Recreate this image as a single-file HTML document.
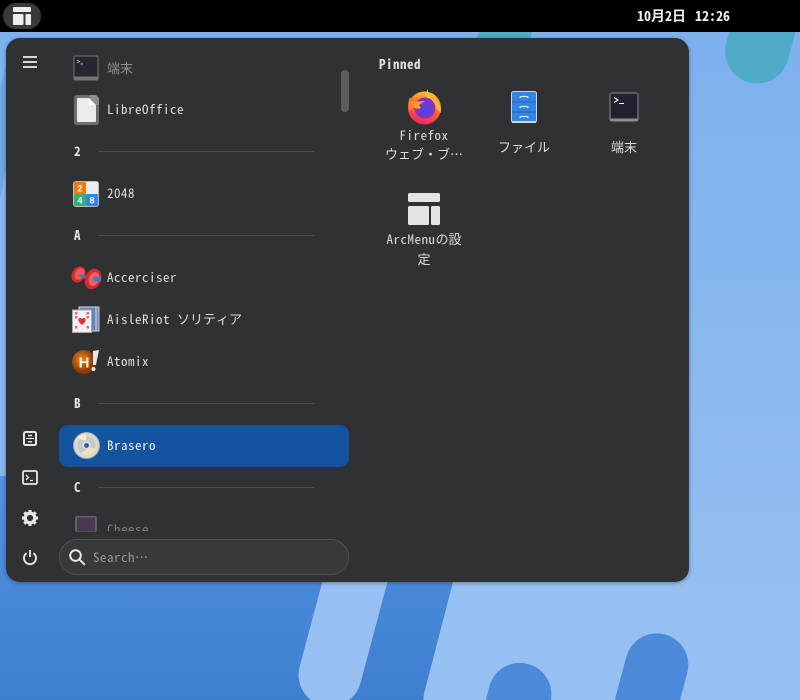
<!DOCTYPE html>
<html lang="ja"><head><meta charset="utf-8"><style>
html,body{margin:0;padding:0;width:800px;height:700px;overflow:hidden;background:#80b2ec}
*{box-sizing:border-box}
body{position:relative;font-family:"Noto Sans Mono CJK JP","DejaVu Sans Mono","Noto Sans CJK JP",monospace;font-size:13px;color:#e6e6e6}
.a{position:absolute}
.t{position:absolute;white-space:nowrap;font-size:13px;line-height:18px;letter-spacing:.5px;color:#dedddc}
.l{position:absolute;height:1px;left:98px;width:216px;background:#4b4c4e}
.h{position:absolute;left:74px;font-weight:700;font-size:13px;line-height:16px;color:#e2e2e2}
.c{position:absolute;text-align:center;white-space:nowrap;font-size:13px;line-height:23px;letter-spacing:.5px;color:#dedddc}
.j{letter-spacing:0}
svg{position:absolute;overflow:visible}
svg.bg{overflow:hidden}
</style></head><body>
<svg class="bg" style="left:0;top:0" width="800" height="700" viewBox="0 0 800 700">
<defs><linearGradient id="bg" x1="0" y1="0" x2="0" y2="1"><stop offset="0" stop-color="#7cb0ee"/><stop offset="1" stop-color="#98c1f1"/></linearGradient>
<linearGradient id="dk" gradientUnits="userSpaceOnUse" x1="0" y1="476" x2="0" y2="700"><stop offset="0" stop-color="#5392e0"/><stop offset="1" stop-color="#3f7fd0"/></linearGradient>
<linearGradient id="ff" x1=".7" y1="0" x2=".4" y2="1"><stop offset="0" stop-color="#ffc82e"/><stop offset=".5" stop-color="#ff6a2a"/><stop offset="1" stop-color="#f0246a"/></linearGradient>
</defs>
<rect width="800" height="700" fill="url(#bg)"/>
<path d="M0 476H420L460 582 423 700H0Z" fill="url(#dk)"/>
<path d="M0 90L12 38H30L0 200Z" fill="#6fa6e6"/>
<path d="M0 200L30 38H300V476H0Z" fill="#8ab8ef"/>
<path d="M453 582L425 690Q423 695 424 700H800V582Z" fill="#96c0f1"/>
<path d="M349 700A31.5 31.5 0 0 0 360.4 683.2L390.7 570H325.5L299.6 666.8A31.5 31.5 0 0 0 311 700Z" fill="#97bff1"/>
<path d="M485.8 700L489.6 685.8A31.5 31.5 0 0 1 550.9 700Z" fill="#4a8ad8"/>
<path d="M614.8 700L626.6 655.8A31.5 31.5 0 0 1 687.4 672.2L680 700Z" fill="#4a8ad8"/>
<path d="M729.2 32L726.1 43.7A32 32 0 0 0 787.9 60.3L795.5 32Z" fill="#4fabc8"/>
<path d="M476 38L480 32H532L530 38Z" fill="#4fabc8"/>
</svg>

<div class="a" style="left:0;top:0;width:800px;height:32px;background:#000"></div>
<div class="a" style="left:3px;top:3px;width:38px;height:26px;border-radius:13px;background:#3a3a3a"></div>
<svg style="left:13px;top:7px" width="18" height="18"><rect x="0" y="0" width="18" height="5" rx="1" fill="#eee"/><rect x="0" y="7" width="10.5" height="11" rx="1" fill="#eee"/><rect x="12.5" y="7" width="5.5" height="11" rx="1" fill="#eee"/></svg>
<div class="a" style="left:637px;top:6px;font-size:14px;line-height:20px;font-weight:700;color:#f0f0f0;white-space:nowrap">10月2日</div>
<div class="a" style="left:695px;top:6px;font-size:14px;line-height:20px;font-weight:700;color:#f0f0f0;white-space:nowrap">12:26</div>

<div class="a" style="left:6px;top:38px;width:683px;height:544px;border-radius:14px;background:#303133;box-shadow:0 1px 4px rgba(0,0,0,.35)"></div>

<!-- left rail -->
<svg style="left:23px;top:56px" width="14" height="12"><path d="M0 1H14M0 6H14M0 11H14" stroke="#eee" stroke-width="1.8"/></svg>
<svg style="left:23px;top:431px" width="14" height="15" fill="none" stroke="#e8e8e8" stroke-width="2"><rect x="1" y="1" width="12" height="13" rx="1.5"/><path d="M3 7.5H11" stroke-width="1.2"/><path d="M5 4.5H9M5 10.8H9" stroke-width="1.4"/></svg>
<svg style="left:22px;top:470px" width="16" height="15" fill="none" stroke="#e8e8e8" stroke-width="1.8"><rect x="1" y="1" width="14" height="13" rx="1.5"/><path d="M4 5L6.5 7.5 4 10M8 10.5H11" stroke-width="1.3"/></svg>
<svg style="left:22px;top:510px" width="16" height="16"><circle cx="8" cy="8" r="4.8" fill="none" stroke="#e8e8e8" stroke-width="3.4"/><path d="M8 0V3M8 13V16M0 8H3M13 8H16M2.3 2.3L4.4 4.4M11.6 11.6L13.7 13.7M2.3 13.7L4.4 11.6M11.6 4.4L13.7 2.3" stroke="#e8e8e8" stroke-width="3"/></svg>
<svg style="left:23px;top:550px" width="14" height="15" fill="none" stroke="#e8e8e8" stroke-width="1.9"><path d="M7 0V7"/><path d="M3.6 3.2A6 6 0 1 0 10.4 3.2"/></svg>

<!-- list -->
<svg style="left:73px;top:55px;opacity:.75" width="26" height="26"><rect x=".5" y=".5" width="25" height="25" rx="2" fill="#8c8c8c"/><rect x="1.5" y="1.5" width="23" height="20" fill="#26222f"/><path d="M4 5L6.5 6.5 4 8M7.5 9H10" stroke="#ddd" stroke-width=".9" fill="none"/></svg>
<div class="t" style="left:107px;top:59px;color:#8f8f8f"><span class="j">端末</span></div>

<svg style="left:74px;top:95px" width="25" height="30"><path d="M3 0H18L25 7V27Q25 30 22 30H3Q0 30 0 27V3Q0 0 3 0Z" fill="#6d6d6d"/><path d="M4 3H15L22 10V26Q22 27 21 27H4Q3 27 3 26V4Q3 3 4 3Z" fill="#ebebeb"/><path d="M15 0H22L25 3V10H18Z" fill="#8d8d8d"/><path d="M15 3L22 10H16Q15 10 15 9Z" fill="#fafafa"/></svg>
<div class="t" style="left:107px;top:100px">LibreOffice</div>

<div class="h" style="top:143px">2</div><div class="l" style="top:151px"></div>
<svg style="left:73px;top:181px" width="26" height="26"><rect width="26" height="26" rx="3" fill="#bbb"/><rect x="1" y="1" width="12" height="12" rx="1.5" fill="#f57900"/><rect x="13" y="1" width="12" height="12" rx="1.5" fill="#eee"/><rect x="1" y="13" width="12" height="12" rx="1.5" fill="#33b07a"/><rect x="13" y="13" width="12" height="12" rx="1.5" fill="#3c82dc"/><text x="7" y="10.5" font-size="9" font-weight="700" fill="#fff" text-anchor="middle" font-family="Liberation Sans">2</text><text x="7" y="22.5" font-size="9" font-weight="700" fill="#fff" text-anchor="middle" font-family="Liberation Sans">4</text><text x="19" y="22.5" font-size="9" font-weight="700" fill="#fff" text-anchor="middle" font-family="Liberation Sans">8</text></svg>
<div class="t" style="left:107px;top:184px">2048</div>

<div class="h" style="top:227px">A</div><div class="l" style="top:235px"></div>
<svg style="left:71px;top:266px" width="31" height="24"><ellipse cx="7.5" cy="8.5" rx="6.5" ry="8.5" fill="#d92a30" transform="rotate(30 7.5 8.5)"/><ellipse cx="8.5" cy="8" rx="4.5" ry="6" fill="#f05a5c" transform="rotate(30 8.5 8)"/><path d="M8 9L24 14" stroke="#5078b8" stroke-width="3"/><ellipse cx="22" cy="13" rx="8" ry="10.5" fill="#d92a30" transform="rotate(20 22 13)"/><ellipse cx="23" cy="13" rx="5" ry="7" fill="#f56060" transform="rotate(20 23 13)"/><rect x="22" y="10.5" width="8" height="5" rx="1" fill="#5078b8"/></svg>
<div class="t" style="left:107px;top:268px">Accerciser</div>

<svg style="left:72px;top:306px" width="28" height="27"><rect x="12" y="1" width="15" height="24" fill="#6f8db8" stroke="#ccc"/><rect x="7" y="1" width="17" height="24" fill="#5f86c0" stroke="#ddd"/><rect x="0.5" y="4" width="19" height="22.5" fill="#f2f2f2" stroke="#aaa"/><path d="M10 13L7 16Q5.5 13 7.5 12 9 11.5 10 13 11 11.5 12.5 12 14.5 13 13 16L10 19 7 16" fill="#e03030"/><rect x="3" y="6" width="2.5" height="2.5" fill="#e66"/><rect x="3" y="10" width="2.5" height="2.5" fill="#e66"/><rect x="3" y="20" width="2.5" height="2.5" fill="#e66"/><rect x="14.5" y="6" width="2.5" height="2.5" fill="#e66"/><rect x="14.5" y="10" width="2.5" height="2.5" fill="#e66"/><rect x="14.5" y="20" width="2.5" height="2.5" fill="#e66"/></svg>
<div class="t" style="left:107px;top:310px">AisleRiot <span class="j">ソリティア</span></div>

<svg style="left:71px;top:349px" width="29" height="26"><defs><radialGradient id="at" cx=".4" cy=".4"><stop offset="0" stop-color="#f08a20"/><stop offset="1" stop-color="#8a3a08"/></radialGradient></defs><circle cx="13" cy="13" r="12" fill="url(#at)"/><text x="13" y="18.5" font-size="15" font-weight="700" fill="#fbf2e0" text-anchor="middle" font-family="Liberation Sans">H</text><path d="M22 2L28 1 25 16 22 16Z" fill="#e8e8e8"/><circle cx="22.5" cy="20" r="2" fill="#e8e8e8"/></svg>
<div class="t" style="left:107px;top:352px">Atomix</div>

<div class="h" style="top:395px">B</div><div class="l" style="top:403px"></div>
<div class="a" style="left:59px;top:425px;width:290px;height:42px;border-radius:9px;background:#14539f"></div>
<svg style="left:73px;top:432px" width="27" height="27"><circle cx="13.5" cy="13.5" r="13" fill="#d8d8d4" stroke="#aaa"/><circle cx="13.5" cy="13.5" r="9" fill="#c6c8cc"/><path d="M4 6A13 13 0 0 1 13 2V9Z" fill="#f5f0c8"/><path d="M8 21A10 10 0 0 0 23 17L18 15Z" fill="#ece7b5"/><circle cx="13.5" cy="13.5" r="4" fill="#e0e0e0"/><circle cx="13.5" cy="13.5" r="2.4" fill="#2d5f9e"/></svg>
<div class="t" style="left:107px;top:436px;color:#f2f2f2">Brasero</div>

<div class="h" style="top:479px">C</div><div class="l" style="top:487px"></div>
<svg style="left:75px;top:516px;opacity:.55" width="22" height="16"><rect width="22" height="16" rx="2" fill="#8a8a8a"/><rect x="2" y="1.5" width="18" height="14" fill="#5c3f70"/></svg>
<div class="t" style="left:107px;top:520px;color:#7f7f7f;height:11px;overflow:hidden">Cheese</div>
<div class="a" style="left:341px;top:70px;width:8px;height:42px;border-radius:4px;background:#5c5d5f"></div>

<!-- search -->
<div class="a" style="left:59px;top:539px;width:290px;height:36px;border-radius:18px;background:#38393b;border:1px solid #4e4f51"></div>
<svg style="left:69px;top:549px" width="17" height="17" fill="none" stroke="#eee" stroke-width="1.9"><circle cx="6.5" cy="6.5" r="5.3"/><path d="M10.5 10.5L15.8 15.8"/></svg>
<div class="t" style="left:93px;top:548px;color:#96979a">Search<span class="j">⋯</span></div>

<!-- pinned -->
<div class="a" style="left:379px;top:56px;font-weight:700;font-size:13px;line-height:16px;letter-spacing:.5px;color:#e2e2e2">Pinned</div>

<svg style="left:407px;top:89px" width="35" height="36"><circle cx="17.5" cy="19" r="16.5" fill="url(#ff)"/><path d="M21 0Q20 7 27 11 34 16 34 24L22 12Q17 6 21 0Z" fill="#ffc52e"/><path d="M3 8L6 13 10 8 14 13 2 22Q0 14 3 8Z" fill="#ff7a2a"/><path d="M27 10Q34 14 34 21L28 20Z" fill="#ffb32e"/><circle cx="18" cy="19" r="10.5" fill="#8a2fc0"/><circle cx="18.5" cy="20" r="6.5" fill="#5b3fd8"/><path d="M4 13L18 12 12 16 14 19Q7 22 4 13Z" fill="#ff9a2c"/></svg>
<div class="c" style="left:374px;top:123px;width:100px">Firefox</div>
<div class="c" style="left:374px;top:142px;width:100px"><span class="j">ウェブ・ブ…</span></div>

<svg style="left:511px;top:91px" width="26" height="32"><rect x=".5" y=".5" width="25" height="31" rx="2" fill="#3584e4" stroke="#c8d4e0"/><path d="M1 11H25M1 21H25" stroke="#1f5fb0"/><path d="M9 7Q9 5.5 10.5 5.5H15.5Q17 5.5 17 7M9 17Q9 15.5 10.5 15.5H15.5Q17 15.5 17 17M9 27Q9 25.5 10.5 25.5H15.5Q17 25.5 17 27" stroke="#d8e8fa" fill="none" stroke-width="1.2"/><rect x="1" y="30" width="24" height="2" fill="#d5d5d5"/></svg>
<div class="c" style="left:474px;top:135px;width:100px"><span class="j">ファイル</span></div>

<svg style="left:609px;top:92px" width="30" height="30"><rect x=".5" y=".5" width="29" height="29" rx="2.5" fill="#8f8f8f"/><rect x="1.5" y="1.5" width="27" height="25" fill="#241f31"/><path d="M5 5.5L9 8 5 10.5M10 11.5H15" stroke="#fff" stroke-width="1.1" fill="none"/></svg>
<div class="c" style="left:574px;top:135px;width:100px"><span class="j">端末</span></div>

<svg style="left:408px;top:193px" width="32" height="32"><rect width="32" height="9" rx="1.5" fill="#e4e4e4"/><rect y="13" width="21" height="19" rx="1.5" fill="#e4e4e4"/><rect x="23" y="13" width="9" height="19" rx="1.5" fill="#e4e4e4"/></svg>
<div class="c" style="left:374px;top:227px;width:100px">ArcMenu<span class="j">の設</span></div>
<div class="c" style="left:374px;top:247px;width:100px"><span class="j">定</span></div>
</body></html>
